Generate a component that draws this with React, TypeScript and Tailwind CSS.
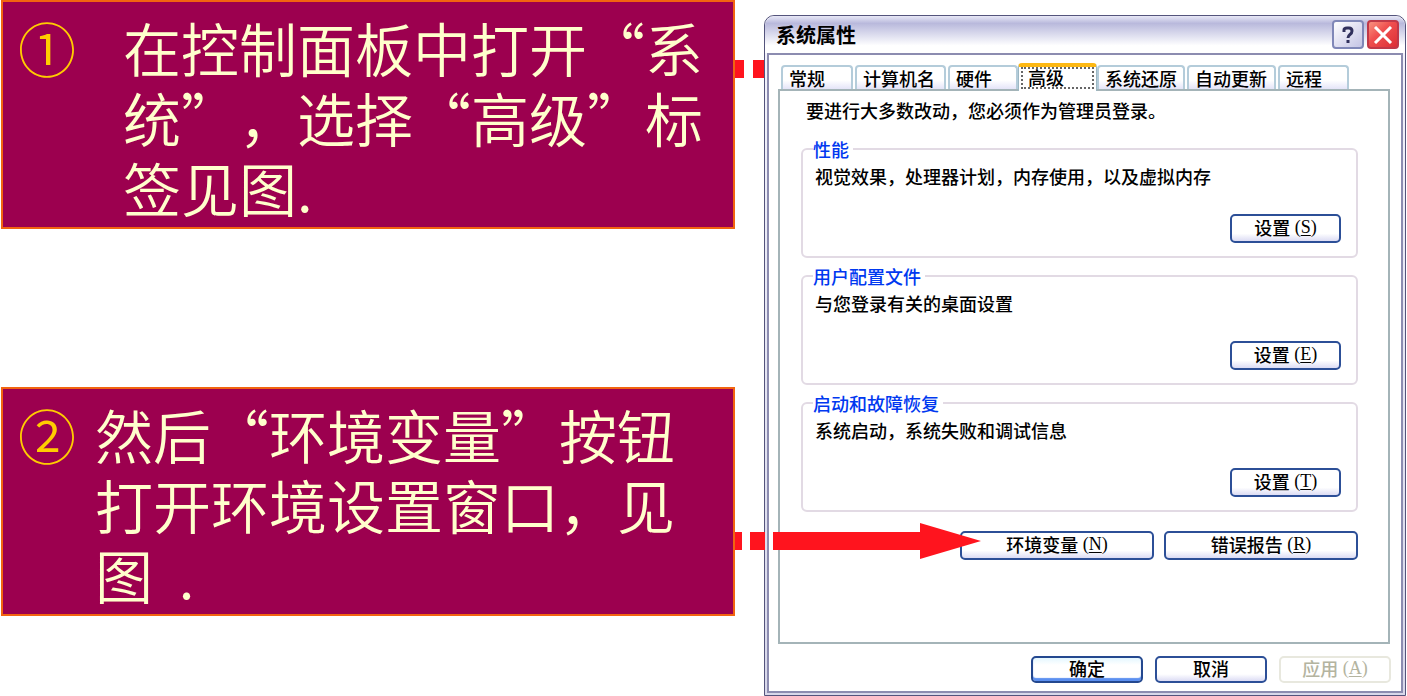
import type { ReactNode } from "react";
import clsx from "clsx";

const tabs = [
  { label: "常规", width: "w-[72px]" },
  { label: "计算机名", width: "w-[91px]" },
  { label: "硬件", width: "w-[70px]" },
  { label: "高级", width: "w-[79px]", active: true },
  { label: "系统还原", width: "w-[88px]" },
  { label: "自动更新", width: "w-[89px]" },
  { label: "远程", width: "w-[71px]" },
];

const sections = [
  { title: "性能", text: "视觉效果，处理器计划，内存使用，以及虚拟内存", accessKey: "S" },
  { title: "用户配置文件", text: "与您登录有关的桌面设置", accessKey: "E" },
  { title: "启动和故障恢复", text: "系统启动，系统失败和调试信息", accessKey: "T" },
];

function Key({ letter }: { letter: string }) {
  return (
    <span className="font-['Liberation_Serif',serif]">
      {" "}(<u className="underline-offset-2">{letter}</u>)
    </span>
  );
}

function DialogButton({
  label,
  accessKey,
  size,
  variant = "normal",
}: {
  label: string;
  accessKey?: string;
  size: string;
  variant?: "normal" | "primary" | "disabled";
}) {
  return (
    <button
      type="button"
      disabled={variant === "disabled"}
      className={clsx(
        "flex items-center justify-center rounded-[5px] border-2 pb-1 leading-5 whitespace-pre",
        size,
        variant === "normal" && "border-[#2c4f97] bg-linear-to-b from-white from-70% to-[#dcdcf4]",
        variant === "primary" &&
          "border-[#24488f] bg-linear-to-b from-[#e4f7ff] via-white via-30% to-white shadow-[inset_0_-3px_1px_#5b8ff0]",
        variant === "disabled" && "border-[#e8e8de] bg-white text-[#b4b4a0]",
      )}
    >
      {label}
      {accessKey && <Key letter={accessKey} />}
    </button>
  );
}

function Step({
  mark,
  textClass,
  children,
  connector,
}: {
  mark: string;
  textClass: string;
  children: ReactNode;
  connector: ReactNode;
}) {
  return (
    <section className="relative ml-px flex border-2 border-[#f26410] bg-[#9c004f] pt-[10px] pb-[5px] pl-[15px] text-[58px] leading-[70px] font-[350] text-[#ffffcc]">
      <span className="w-[58px] shrink-0 text-[#ffcc00]">{mark}</span>
      <p className={clsx("flex-1 pr-4 [text-spacing-trim:space-all]", textClass)}>{children}</p>
      {connector}
    </section>
  );
}

export default function App() {
  return (
    <div
      lang="zh-CN"
      className="grid min-h-screen grid-cols-[735fr_29fr_643fr] items-start bg-white font-['Noto_Sans_CJK_SC',sans-serif] text-black"
    >
      <main className="z-10 flex flex-col gap-[158px]">
        <Step
          mark="①"
          textClass="ml-[47px]"
          connector={
            <svg className="absolute top-[58px] left-full ml-0.5" width="30" height="18" aria-hidden="true">
              <path d="M0 0h9v18H0zM18 0h11v18H18z" fill="#ff141e" />
            </svg>
          }
        >
          在控制面板中打开“系统”，选择“高级”标签见图.
        </Step>
        <Step
          mark="②"
          textClass="ml-[19px]"
          connector={
            <svg className="absolute top-[134px] left-full ml-0.5" width="248" height="36" aria-hidden="true">
              <path d="M0 9h7v18H0zM15 9h15v18H15zM38 9h147V0l61 18l-61 18v-9H38z" fill="#ff141e" />
            </svg>
          }
        >
          {"然后“环境变量”按钮打开环境设置窗口，见图\u00a0\u00a0."}
        </Step>
      </main>

      <div />

      <div
        role="dialog"
        aria-labelledby="dialog-title"
        className="mt-[15px] mr-px rounded-t-[10px] border border-[#54547c] bg-linear-to-b from-[#f4f4fc] to-[#d8d8ea] text-lg leading-5 font-medium"
      >
        <header className="flex h-[37px] items-center justify-between rounded-t-[10px] bg-linear-to-b from-[#e8e8f6] via-[#b9b9dc] via-20% to-white to-80% pr-[6px] pl-[11px]">
          <h1 id="dialog-title" className="text-xl leading-5 font-bold">系统属性</h1>
          <div className="flex gap-[3px]">
            <button type="button" aria-label="帮助" className="flex h-[29px] w-8 items-center justify-center rounded-[4px] border-2 border-[#8088b8] bg-linear-to-br from-white to-[#c4c4e4]">
              <svg width="14" height="18" viewBox="0 0 14 18" fill="none" stroke="#30305c" strokeWidth="3" aria-hidden="true">
                <path d="M3 6V4Q3 2 6 2h2q3 0 3 3 0 2-2 3.500T7 12" />
                <path d="M5.500 15.500h3" />
              </svg>
            </button>
            <button type="button" aria-label="关闭" className="flex h-[29px] w-8 items-center justify-center rounded-[4px] border-2 border-[#c03848] bg-linear-to-br from-[#f89080] via-[#f05050] via-40% to-[#dc2c34]">
              <svg width="20" height="18" viewBox="0 0 20 18" fill="none" stroke="#fff" strokeWidth="3" aria-hidden="true">
                <path d="M2 1l16 16M18 1L2 17" />
              </svg>
            </button>
          </div>
        </header>

        <div className="mx-[2px] mb-[2px] border-2 border-[#8c8cb0] bg-white pt-2 pb-2">
          <div role="tablist" className="flex items-end gap-[2px] pr-10 pl-3">
            {tabs.map((tab) =>
              tab.active ? (
                <button
                  key={tab.label}
                  type="button"
                  role="tab"
                  aria-selected="true"
                  className={clsx(
                    "z-10 -mx-[2px] -mb-[2px] h-7 rounded-t-[4px] border-x border-t-4 border-x-[#9cb8c4] border-t-[#fdb813] bg-white px-[2px] pb-[2px] text-left",
                    tab.width,
                  )}
                >
                  <span className="block h-[22px] border-2 border-dotted border-[#666] pl-[5px] leading-4">{tab.label}</span>
                </button>
              ) : (
                <button
                  key={tab.label}
                  type="button"
                  role="tab"
                  aria-selected="false"
                  className={clsx(
                    "h-6 rounded-t-[4px] border-2 border-b-0 border-[#b4ccda] bg-linear-to-b from-white from-60% to-[#e4e4f8] pb-[1px] pl-[6px] text-left whitespace-nowrap",
                    tab.width,
                  )}
                >
                  {tab.label}
                </button>
              ),
            )}
          </div>

          <div role="tabpanel" className="mr-[11px] ml-[9px] border-2 border-[#a4b4b8] pt-[9px] pr-[30px] pb-[82px] pl-[21px]">
            <p className="pl-[5px]">要进行大多数改动，您必须作为管理员登录。</p>
            <div className="mt-[19px] flex flex-col gap-2">
              {sections.map((s) => (
                <fieldset key={s.title} className="rounded-[6px] border-2 border-[#e2dae4] pr-[15px] pb-[13px] pl-[10px]">
                  <legend className="pr-1 text-[#0038f0]">{s.title}</legend>
                  <p className="mt-[7px] pl-[2px] [text-spacing-trim:space-all]">{s.text}</p>
                  <div className="mt-7 flex justify-end">
                    <DialogButton label="设置" accessKey={s.accessKey} size="h-[29px] w-[111px]" />
                  </div>
                </fieldset>
              ))}
            </div>
            <div className="mt-[19px] flex justify-end gap-[10px]">
              <DialogButton label="环境变量" accessKey="N" size="h-[29px] w-[194px]" />
              <DialogButton label="错误报告" accessKey="R" size="h-[29px] w-[194px]" />
            </div>
          </div>

          <div className="mt-3 mr-[10px] flex justify-end gap-3">
            <DialogButton label="确定" size="h-[27px] w-[112px]" variant="primary" />
            <DialogButton label="取消" size="h-[27px] w-[112px]" />
            <DialogButton label="应用" accessKey="A" size="h-[27px] w-[112px]" variant="disabled" />
          </div>
        </div>
      </div>
    </div>
  );
}
